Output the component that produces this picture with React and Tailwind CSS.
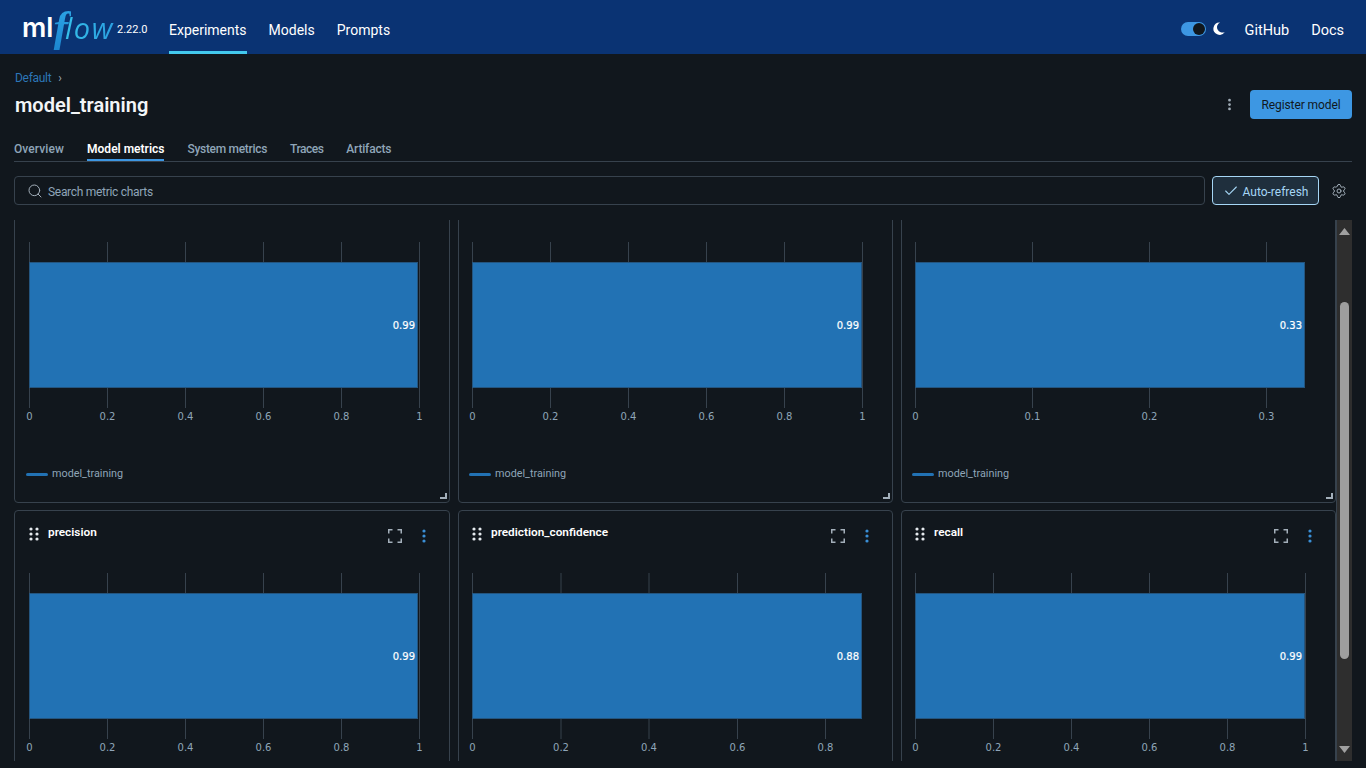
import React from 'react';
import { Search, Check, Settings, MoreVertical } from 'lucide-react';

const UI_FONT = "font-['Roboto','Noto_Sans',sans-serif]";

const fullTicks = [['0', 0], ['0.2', 78], ['0.4', 156], ['0.6', 234], ['0.8', 312], ['1', 390]];

const charts = [
  { title: 'accuracy', value: '0.99', barWidth: 388, pad: 'pl-[14px]', ticks: fullTicks },
  { title: 'f1_score', value: '0.99', barWidth: 389, pad: 'pl-[13px]', ticks: fullTicks },
  { title: 'loss', value: '0.33', barWidth: 389, pad: 'pl-[13px]', ticks: [['0', 0], ['0.1', 117], ['0.2', 234], ['0.3', 351]] },
  { title: 'precision', value: '0.99', barWidth: 388, pad: 'pl-[14px]', ticks: fullTicks },
  { title: 'prediction_confidence', value: '0.88', barWidth: 389, pad: 'pl-[13px]', ticks: [['0', 0], ['0.2', 88.5], ['0.4', 176.5], ['0.6', 265], ['0.8', 353]] },
  { title: 'recall', value: '0.99', barWidth: 389, pad: 'pl-[13px]', ticks: fullTicks },
];

// bar chart is drawn in plot coordinates, 0 = left edge of the bar
function BarPlot({ value, ticks, barWidth }) {
  return (
    <svg width="410" height="190" className="block overflow-visible" viewBox="0 0 410 190">
      {ticks.map(([label, x]) => (
        <g key={label}>
          <line x1={x + 0.5} x2={x + 0.5} y1="1" y2="167" stroke="#37424d" strokeWidth="1" />
          <text x={x + 0.5} y="179" textAnchor="middle" fontSize="10" fill="#8fa5b8" fontFamily="'DejaVu Sans', sans-serif">{label}</text>
        </g>
      ))}
      <rect x="0.5" y="21.5" width={barWidth} height="125" fill="#2272b4" stroke="#24557f" strokeWidth="1" />
      <text x={barWidth - 2} y="88" textAnchor="end" fontSize="10" fontWeight="400" stroke="#ffffff" strokeWidth="0.2" fill="#ffffff" fontFamily="'DejaVu Sans', sans-serif">{value}</text>
    </svg>
  );
}

function ChartCard({ chart }) {
  return (
    <div className={`relative h-[324px] rounded border border-[#37424d] bg-[#11171d] ${chart.pad}`}>
      <div className="flex h-[61px] items-start pr-[23px] pt-[12px]">
        <svg width="10" height="14" viewBox="0 0 10 14" className="mt-[4px] shrink-0 fill-[#e4e9ed]">
          <circle cx="2" cy="2" r="1.6" /><circle cx="8" cy="2" r="1.6" />
          <circle cx="2" cy="7" r="1.6" /><circle cx="8" cy="7" r="1.6" />
          <circle cx="2" cy="12" r="1.6" /><circle cx="8" cy="12" r="1.6" />
        </svg>
        <span className="ml-[9px] text-[11.8px] font-semibold leading-[18px] text-white">{chart.title}</span>
        <svg width="14" height="14" viewBox="0 0 14 14" fill="none" stroke="#a3afba" strokeWidth="1.5" className="ml-auto mt-[6px] shrink-0">
          <path d="M.75 4.5V.75H4.5M9.5 .75h3.75V4.5M13.25 9.5v3.75H9.5M4.5 13.25H.75V9.5" />
        </svg>
        <svg width="4" height="14" viewBox="0 0 4 14" className="ml-[20px] mt-[6px] shrink-0 fill-[#3a8fd6]">
          <circle cx="2" cy="2" r="1.6" /><circle cx="2" cy="7" r="1.6" /><circle cx="2" cy="12" r="1.6" />
        </svg>
      </div>
      <BarPlot value={chart.value} ticks={chart.ticks} barWidth={chart.barWidth} />
      <div className="ml-[-3px] mt-[35px] flex items-center gap-[4px]">
        <span className="h-[3px] w-[22px] rounded-sm bg-[#2272b4]" />
        <span className="text-[10.8px] leading-[16px] text-[#8fa5b8]">model_training</span>
      </div>
      <span className="absolute bottom-[3px] right-[2px] h-[6px] w-[7px] border-b-2 border-r-2 border-[#a3afba]" />
    </div>
  );
}

export default function App() {
  return (
    <div className={`flex h-[768px] w-[1366px] flex-col overflow-hidden bg-[#11171d] ${UI_FONT}`}>
      {/* top nav */}
      <header className="flex h-[54px] shrink-0 items-center bg-[#0a3373] pl-[22px] pr-[22px]">
        <div className="flex w-[126px] items-center">
          <span className="font-['Inter',sans-serif] text-[27px] font-semibold leading-none text-white">ml</span>
          <span className="ml-[0px] mt-[2px] bg-gradient-to-b from-[#2da5e6] to-[#1c86d0] bg-clip-text pr-[3px] font-['Liberation_Serif',serif] text-[44px] font-bold italic leading-none text-transparent">f</span>
          <span className="ml-[-6px] bg-gradient-to-r from-[#36c0ea] to-[#2a9ee0] bg-clip-text pr-[2px] font-['Open_Sans',sans-serif] text-[29px] font-medium italic leading-none tracking-[1.5px] text-transparent">low</span>
          <span className="ml-[1px] mt-[6px] text-[11px] text-white">2.22.0</span>
        </div>
        <nav className="ml-[21px] flex h-full gap-[22px] text-[14px] text-white">
          <a className="flex h-full items-center border-b-[3px] border-[#43c9ed] pt-[10px]">Experiments</a>
          <a className="flex h-full items-center border-b-[3px] border-transparent pt-[10px]">Models</a>
          <a className="flex h-full items-center border-b-[3px] border-transparent pt-[10px]">Prompts</a>
        </nav>
        <div className="ml-auto flex items-center pt-[3px] text-[14.5px] text-white">
          <span className="flex h-[14px] w-[25px] items-center justify-end rounded-full bg-[#3d97e3] pr-[1px]">
            <span className="h-[12px] w-[12px] rounded-full bg-[#11171d]" />
          </span>
          <svg width="12" height="13" viewBox="0 0 12 13" className="ml-[7px] fill-white">
            <path d="M7 .4A6.2 6.2 0 1 0 11.8 10 5.2 5.2 0 0 1 7 .4Z" />
          </svg>
          <a className="ml-[20px] mt-[4px]">GitHub</a>
          <a className="ml-[22px] mt-[4px]">Docs</a>
        </div>
      </header>

      {/* page */}
      <main className="flex min-h-0 flex-1 flex-col pl-[14px] pr-[14px]">
        <div className="mt-[16px] flex h-[16px] items-center pl-[1px] text-[12px] tracking-[-0.3px] text-[#2c76b8]">
          Default <span className="ml-[7px] text-[12px] text-[#9aa8b5]">›</span>
        </div>
        <div className="flex h-[36px] items-center">
          <h1 className="pl-[1px] pt-[1px] text-[20px] font-semibold text-[#f3f5f7]">model_training</h1>
          <MoreVertical size={15} strokeWidth={2.4} className="ml-auto text-[#a3afba]" />
          <button className="ml-[13px] flex h-[29px] w-[102px] items-center justify-center rounded bg-[#3d97e3] pt-[2px] text-[12px] tracking-[-0.1px] text-[#11171d]">Register model</button>
        </div>
        <div className="mt-[14px] flex h-[26px] gap-[23px] border-b border-[#37424d] text-[12px] font-medium text-[#8fa5b8]">
          <a className="pt-[4px] tracking-[0.1px]">Overview</a>
          <a className="border-b-[2px] border-[#3d97e3] pt-[4px] font-semibold text-white">Model metrics</a>
          <a className="pt-[4px] tracking-[-0.3px]">System metrics</a>
          <a className="pt-[4px] tracking-[-0.5px]">Traces</a>
          <a className="pt-[4px] tracking-[-0.2px]">Artifacts</a>
        </div>

        {/* chart toolbar */}
        <div className="mt-[14px] flex h-[29px] items-center">
          <div className="flex h-full flex-1 items-center rounded border border-[#37424d] pl-[12px] text-[12px] tracking-[-0.3px] text-[#8fa5b8]">
            <Search size={16} strokeWidth={1.5} className="text-[#a3afba]" />
            <span className="ml-[5px] pt-[3px]">Search metric charts</span>
          </div>
          <button className="ml-[7px] flex h-full w-[107px] items-center justify-center gap-[4px] rounded border border-[#a6d6f5] bg-[#1f2f3d] text-[12px] text-[#a6d6f5]">
            <Check size={16} strokeWidth={1.6} />
            <span className="pt-[3px]">Auto-refresh</span>
          </button>
          <Settings size={16} strokeWidth={1.5} className="ml-[12px] mr-[5px] text-[#a3afba]" />
        </div>

        {/* charts + scrollbar */}
        <div className="mt-[15px] flex h-[541px] min-h-0">
          <div className="min-w-0 flex-1 overflow-hidden">
            <div className="mt-[-41px] grid grid-cols-[436px_435px_435px] gap-x-[8px] gap-y-[7px]">
              {charts.map((c) => <ChartCard key={c.title} chart={c} />)}
            </div>
          </div>
          <div className="flex w-[16px] shrink-0 flex-col items-center border-l border-[#37424d] bg-[#2e2e2e]">
            <svg width="11" height="7" viewBox="0 0 11 7" className="mt-[8px] fill-[#a0a0a0]"><path d="M5.5 0 11 7H0Z" /></svg>
            <div className="mt-[67px] h-[357px] w-[9px] rounded-full bg-[#9e9e9e]" />
            <svg width="11" height="7" viewBox="0 0 11 7" className="mb-[8px] mt-auto fill-[#a0a0a0]"><path d="M5.5 7 11 0H0Z" /></svg>
          </div>
        </div>
      </main>
    </div>
  );
}
